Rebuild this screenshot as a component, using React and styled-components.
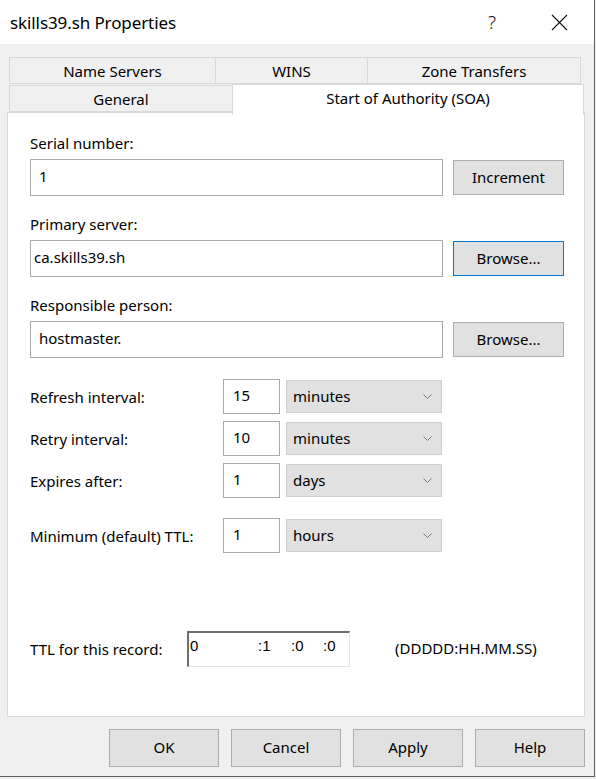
import React from 'react';
import styled, { createGlobalStyle } from 'styled-components';

const GlobalStyle = createGlobalStyle`
  html, body {
    margin: 0;
    padding: 0;
    background: #f0f0f0;
  }
  body {
    font-family: "Noto Sans", "Open Sans", sans-serif;
    color: #000;
  }
`;

const Window = styled.div`
  width: 594px;
  height: 776px;
  display: flex;
  flex-direction: column;
  border-right: 1px solid #5f5f5f;
  border-bottom: 1px solid #5f5f5f;
  background: #f0f0f0;
`;

const TitleBar = styled.div`
  height: 44px;
  flex-shrink: 0;
  background: #fff;
  display: flex;
  align-items: center;
  padding-left: 10px;
`;

const Title = styled.div`
  flex: 1;
  font-size: 17px;
  letter-spacing: -0.1px;
`;

const TitleButton = styled.div`
  width: ${(p) => p.$w || 64}px;
  height: 44px;
  display: flex;
  align-items: center;
  justify-content: center;
  font-size: 19px;
  font-weight: 300;
  color: #111;
`;

const Body = styled.div`
  flex: 1;
  display: flex;
  flex-direction: column;
  padding: 13px 9px 0 7px;
`;

const TabStrip = styled.div`
  display: flex;
  flex-direction: column;
  padding-left: 3px;
`;

const TabRow = styled.div`
  display: flex;
  height: ${(p) => p.$h}px;
  align-items: flex-end;
`;

const Tab = styled.div`
  width: ${(p) => p.$w}px;
  height: ${(p) => (p.$active ? 31 : 27)}px;
  box-sizing: border-box;
  display: flex;
  justify-content: center;
  align-items: ${(p) => (p.$active ? 'flex-start' : 'center')};
  padding-top: ${(p) => (p.$active ? 3 : 0)}px;
  font-size: 15px;
  background: ${(p) => (p.$active ? '#fff' : '#f0f0f0')};
  border: 1px solid #d9d9d9;
  border-bottom: ${(p) => (p.$active ? 'none' : '1px solid #d9d9d9')};
  margin-left: -1px;
  margin-bottom: ${(p) => (p.$active ? -3 : 0)}px;
  position: relative;
  z-index: ${(p) => (p.$active ? 2 : 0)};
`;

const Panel = styled.div`
  height: 605px;
  box-sizing: border-box;
  background: #fff;
  border: 1px solid #d9d9d9;
  padding: 20px 20px 0 22px;
  display: flex;
  flex-direction: column;
  position: relative;
  z-index: 1;
`;

const Label = styled.div`
  font-size: 15px;
  line-height: 20px;
  height: 20px;
`;

const FieldGroup = styled.div`
  display: flex;
  flex-direction: column;
  gap: 6px;
  margin-bottom: 18px;
`;

const FieldLine = styled.div`
  display: flex;
  align-items: center;
  gap: 10px;
`;

const TextBox = styled.div`
  box-sizing: border-box;
  width: ${(p) => (p.$w ? `${p.$w}px` : 'auto')};
  flex: ${(p) => (p.$w ? 'none' : 1)};
  height: ${(p) => p.$h || 37}px;
  border: 1px solid #a9a9a9;
  background: #fff;
  display: flex;
  align-items: center;
  padding-left: ${(p) => (p.$pad != null ? p.$pad : 8)}px;
  padding-bottom: 4px;
  font-size: 15px;
`;

const Button = styled.div`
  box-sizing: border-box;
  width: ${(p) => p.$w || 111}px;
  height: ${(p) => p.$h || 35}px;
  flex-shrink: 0;
  background: #e1e1e1;
  border: 1px solid ${(p) => (p.$focus ? '#0078d7' : '#adadad')};
  display: flex;
  align-items: center;
  justify-content: center;
  font-size: 15px;
  padding-bottom: 2px;
`;

const IntervalList = styled.div`
  display: flex;
  flex-direction: column;
  margin-top: 3px;
`;

const IntervalRow = styled.div`
  display: grid;
  grid-template-columns: 187px 57px 156px;
  column-gap: 6px;
  align-items: center;
  height: 35px;
  margin-top: ${(p) => p.$mt || 0}px;
`;

const Combo = styled.div`
  box-sizing: border-box;
  height: 33px;
  background: #e1e1e1;
  border: 1px solid #cfcfcf;
  display: flex;
  align-items: center;
  justify-content: space-between;
  padding: 0 9px 1px 6px;
  font-size: 15px;
  margin-top: -1px;
`;

const Chevron = styled.svg`
  width: 9px;
  height: 5px;
  margin-top: 1px;
`;

const TtlRow = styled.div`
  display: flex;
  align-items: center;
  margin-top: auto;
  margin-bottom: 49px;
  height: 36px;
`;

const TtlLabel = styled(Label)`
  width: 157px;
`;

const SunkenBox = styled.div`
  box-sizing: border-box;
  width: 163px;
  height: 36px;
  border-top: 2px solid #6d6d6d;
  border-left: 2px solid #6d6d6d;
  border-right: 1px solid #e3e3e3;
  border-bottom: 1px solid #e3e3e3;
  background: #fff;
  display: flex;
  align-items: flex-start;
  padding-top: 4px;
  font-family: "Liberation Sans", Arial, sans-serif;
  font-size: 15px;
`;

const Seg = styled.span`
  width: ${(p) => p.$w}px;
  flex-shrink: 0;
  padding-left: 1px;
`;

const Format = styled.div`
  font-size: 15px;
  margin-left: 45px;
  padding-bottom: 2px;
`;

const Footer = styled.div`
  display: flex;
  justify-content: flex-end;
  gap: 12px;
  padding-top: 12px;
`;

const intervals = [
  { label: 'Refresh interval:', value: '15', unit: 'minutes', mt: 0 },
  { label: 'Retry interval:', value: '10', unit: 'minutes', mt: 7 },
  { label: 'Expires after:', value: '1', unit: 'days', mt: 7 },
  { label: 'Minimum (default) TTL:', value: '1', unit: 'hours', mt: 20 },
];

function CloseIcon() {
  return (
    <svg width="17" height="17" viewBox="0 0 17 17">
      <path d="M1 1 L16 16 M16 1 L1 16" stroke="#111" strokeWidth="1.1" fill="none" />
    </svg>
  );
}

export default function App() {
  return (
    <>
      <GlobalStyle />
      <Window>
        <TitleBar>
          <Title>skills39.sh Properties</Title>
          <TitleButton>?</TitleButton>
          <TitleButton $w={70}>
            <CloseIcon />
          </TitleButton>
        </TitleBar>
        <Body>
          <TabStrip>
            <TabRow $h={27}>
              <Tab $w={207}>Name Servers</Tab>
              <Tab $w={153}>WINS</Tab>
              <Tab $w={214}>Zone Transfers</Tab>
            </TabRow>
            <TabRow $h={28}>
              <Tab $w={224}>General</Tab>
              <Tab $w={352} $active>
                Start of Authority (SOA)
              </Tab>
            </TabRow>
          </TabStrip>
          <Panel>
            <FieldGroup>
              <Label>Serial number:</Label>
              <FieldLine>
                <TextBox $h={37}>1</TextBox>
                <Button $h={35}>Increment</Button>
              </FieldLine>
            </FieldGroup>
            <FieldGroup>
              <Label>Primary server:</Label>
              <FieldLine>
                <TextBox $h={37} $pad={3}>ca.skills39.sh</TextBox>
                <Button $h={35} $focus>
                  Browse...
                </Button>
              </FieldLine>
            </FieldGroup>
            <FieldGroup>
              <Label>Responsible person:</Label>
              <FieldLine>
                <TextBox $h={37} $pad={8}>hostmaster.</TextBox>
                <Button $h={35}>Browse...</Button>
              </FieldLine>
            </FieldGroup>
            <IntervalList>
              {intervals.map((it) => (
                <IntervalRow key={it.label} $mt={it.mt}>
                  <Label>{it.label}</Label>
                  <TextBox $h={35} $pad={9}>
                    {it.value}
                  </TextBox>
                  <Combo>
                    <span>{it.unit}</span>
                    <Chevron viewBox="0 0 9 5">
                      <path d="M0.5 0.5 L4.5 4.5 L8.5 0.5" stroke="#7a7a7a" fill="none" strokeWidth="1" />
                    </Chevron>
                  </Combo>
                </IntervalRow>
              ))}
            </IntervalList>
            <TtlRow>
              <TtlLabel>TTL for this record:</TtlLabel>
              <SunkenBox>
                <Seg $w={67}>0</Seg>
                <Seg $w={32}>:1</Seg>
                <Seg $w={31}>:0</Seg>
                <Seg $w={20}>:0</Seg>
              </SunkenBox>
              <Format>(DDDDD:HH.MM.SS)</Format>
            </TtlRow>
          </Panel>
          <Footer>
            <Button $w={110} $h={38}>OK</Button>
            <Button $w={110} $h={38}>Cancel</Button>
            <Button $w={110} $h={38}>Apply</Button>
            <Button $w={110} $h={38}>Help</Button>
          </Footer>
        </Body>
      </Window>
    </>
  );
}
